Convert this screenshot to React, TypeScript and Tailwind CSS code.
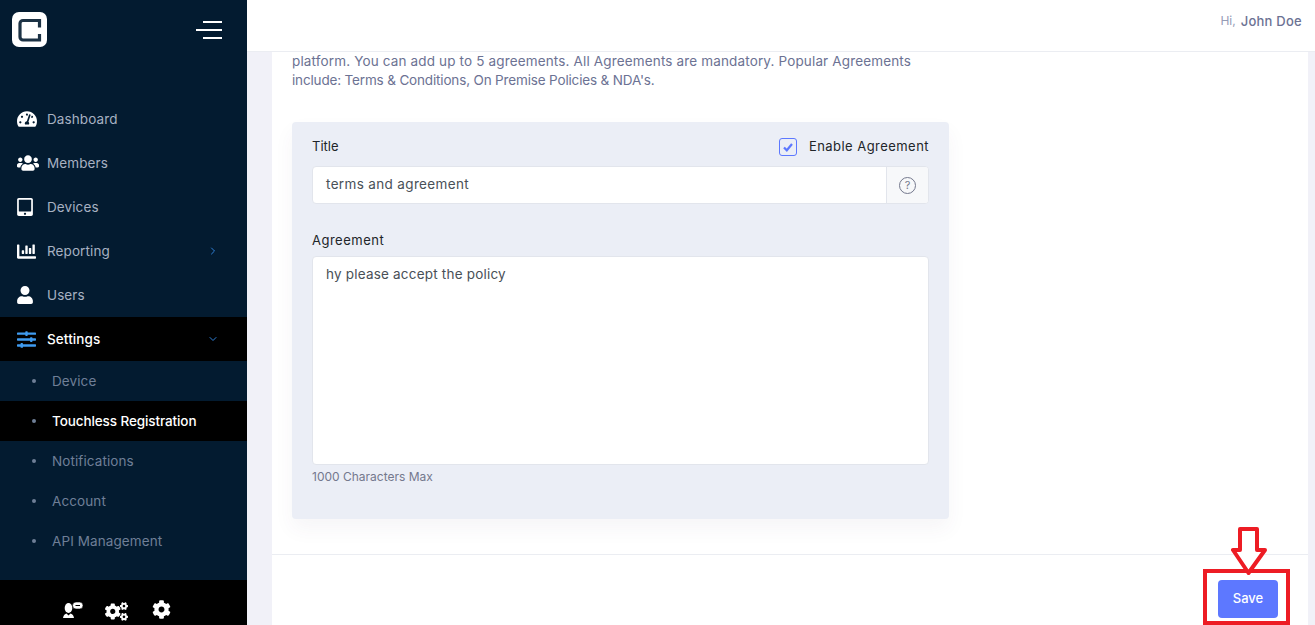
import { FaChartBar, FaCog, FaCogs, FaSlidersH, FaTabletAlt, FaTachometerAlt, FaUser, FaUsers } from "react-icons/fa";
import { FiChevronDown, FiChevronRight } from "react-icons/fi";

const menu = [
  { label: "Dashboard", icon: <FaTachometerAlt className="text-[20px]" /> },
  { label: "Members", icon: <FaUsers className="text-[22px]" /> },
  { label: "Devices", icon: <FaTabletAlt className="-ml-[1px] text-[18px]" /> },
  { label: "Reporting", icon: <FaChartBar className="text-[19px]" />, arrow: true },
  { label: "Users", icon: <FaUser className="-ml-[1px] text-[18px]" /> },
];

const subMenu = ["Device", "Touchless Registration", "Notifications", "Account", "API Management"];

function Sidebar() {
  return (
    <aside className="flex h-[625px] w-[247px] shrink-0 flex-col overflow-hidden bg-[#031b30]">
      <div className="flex h-[97px] shrink-0 items-start justify-between pl-3 pr-[25px] pt-3">
        <svg viewBox="0 0 35 35" className="h-[35px] w-[35px]">
          <rect width="35" height="35" rx="7" fill="#fff" />
          <path d="M27.500 15.500V8.500H11a3 3 0 0 0-3 3V25a3 3 0 0 0 3 3h16.500v-6" fill="none" stroke="#1c3245" strokeWidth="3.200" />
        </svg>
        <div className="mt-[9px] flex w-[26px] flex-col items-end gap-[6px]">
          <span className="h-[2px] w-[19px] bg-white" />
          <span className="h-[2px] w-[26px] bg-white" />
          <span className="h-[2px] w-[19px] bg-white" />
        </div>
      </div>

      <nav className="flex-1 text-[13.5px] tracking-[0.1px] text-[#a7b1c2]">
        {menu.map((item) => (
          <div key={item.label} className="flex h-11 items-center pl-[17px] pr-[28px]">
            <span className="flex w-[30px] text-white">{item.icon}</span>
            <span className="flex-1">{item.label}</span>
            {item.arrow && <FiChevronRight className="text-[12px] text-[#2f80d8]" />}
          </div>
        ))}
        <div className="flex h-11 items-center bg-black pl-[17px] pr-[28px] font-medium text-white">
          <span className="flex w-[30px] text-[#3f9bf0]">
            <FaSlidersH className="text-[19px]" />
          </span>
          <span className="flex-1">Settings</span>
          <FiChevronDown className="text-[12px] text-[#2f80d8]" />
        </div>
        {subMenu.map((label) => {
          const active = label === "Touchless Registration";
          return (
            <div
              key={label}
              className={
                active
                  ? "flex h-10 items-center bg-black pl-[32px] font-medium tracking-[-0.1px] text-white"
                  : "flex h-10 items-center pl-[32px] text-[#6f7f97]"
              }
            >
              <span className="mr-[16px] h-[4px] w-[4px] rounded-full bg-[#6f7f97]" />
              {label}
            </div>
          );
        })}
      </nav>

      <div className="flex h-[45px] shrink-0 items-start gap-[24px] bg-black pl-[63px] pt-[20px] text-white">
        <svg viewBox="0 0 20 16" className="mt-[2px] h-[16px] w-[20px]" fill="currentColor">
          <ellipse cx="5.500" cy="6" rx="3.800" ry="5" />
          <path d="M0 16c.5-3 2-4 3.500-4.500l2 2 2-2c1.500.5 3 1.500 3.500 4.500z" />
          <rect x="9.500" y="0" width="10.500" height="7" rx="3.500" stroke="#000" strokeWidth="0.600" />
          <rect x="12.500" y="3" width="4.500" height="1" fill="#000" />
        </svg>
        <FaCogs className="-ml-[2px] text-[23px]" />
        <FaCog className="text-[19px]" />
      </div>
    </aside>
  );
}

export default function App() {
  return (
    <div className="relative flex h-[625px] w-[1315px] overflow-hidden bg-[#f1f1f8] font-['Inter','Liberation_Sans',sans-serif]">
      <Sidebar />

      <div className="flex min-w-0 flex-1 flex-col">
        <header className="flex h-[52px] shrink-0 items-start justify-end gap-[5px] border-b border-[#ebedf2] bg-white pr-[13px] pt-[12px]">
          <span className="text-[12px] text-[#959cb6]">Hi,</span>
          <span className="text-[13px] font-medium tracking-[0.25px] text-[#6c7293]">John Doe</span>
        </header>

        <main className="ml-[25px] mr-[7px] flex flex-1 flex-col bg-white">
          <p className="h-[70px] shrink-0 pl-[20px] text-[13.5px] leading-[19px] text-[#6c7293]">
            <span className="tracking-[0.15px]">
              platform. You can add up to 5 agreements. All Agreements are mandatory. Popular Agreements
            </span>
            <br />
            <span className="tracking-[-0.16px]">include: Terms &amp; Conditions, On Premise Policies &amp; NDA's.</span>
          </p>

          <section className="ml-[20px] h-[397px] w-[657px] shrink-0 rounded-[4px] bg-[#ebeef6] px-[20px] pt-[15px] shadow-[0_10px_20px_rgba(82,63,105,0.05)]">
            <div className="flex h-[29px] items-center justify-between pb-[11px] pt-[2px] text-[13px] text-[#212529]">
              <span>Title</span>
              <label className="flex items-center gap-[12px] tracking-[0.45px]">
                <span className="flex h-[18px] w-[18px] items-center justify-center rounded-[3px] border-[1.5px] border-[#5d78ff]">
                  <svg viewBox="0 0 12 12" className="h-[12px] w-[12px]" fill="none" stroke="#5d78ff" strokeWidth="2.200">
                    <path d="M2 6.500l2.800 2.800L10 3" />
                  </svg>
                </span>
                Enable Agreement
              </label>
            </div>

            <div className="flex h-[38px] overflow-hidden rounded-[4px] border border-[#e2e5ec] bg-white text-[13.5px] tracking-[0.35px] text-[#495057]">
              <div className="flex flex-1 items-center pb-[1px] pl-[13px]">terms and agreement</div>
              <div className="flex w-[42px] items-center justify-center border-l border-[#e2e5ec] bg-[#f7f8fa]">
                <span className="flex h-[17px] w-[17px] items-center justify-center rounded-full border border-[#74788d] text-[11px] tracking-normal text-[#74788d]">
                  ?
                </span>
              </div>
            </div>

            <div className="mt-[26px] text-[13px] leading-[20px] tracking-[0.5px] text-[#212529]">Agreement</div>
            <div className="mt-[6px] h-[209px] rounded-[4px] border border-[#e2e5ec] bg-white px-[13px] py-[7px] text-[13.5px] tracking-[0.2px] text-[#495057]">
              hy please accept the policy
            </div>
            <div className="mt-[3px] text-[12px] leading-[18px] text-[#74788d]">1000 Characters Max</div>
          </section>

          <footer className="mt-[35px] flex flex-1 items-start justify-end border-t border-[#ebedf2] pr-[30px] pt-[25px]">
            <button className="h-[38px] w-[60px] rounded-[4px] bg-[#5d78ff] text-[13px] font-medium text-white">
              Save
            </button>
          </footer>
        </main>
      </div>

      {/* red annotation over the save button */}
      <div className="pointer-events-none absolute left-[1203px] top-[569px] h-[56px] w-[87px] border-[4px] border-[#ed1c24]" />
      <svg viewBox="0 0 36 50" className="pointer-events-none absolute left-[1231px] top-[526px] h-[50px] w-[36px]" fill="white" stroke="#ed1c24" strokeWidth="4" strokeLinejoin="round">
        <path d="M9 3h17v21h8L17.500 47 2 24h7z" />
      </svg>
    </div>
  );
}
